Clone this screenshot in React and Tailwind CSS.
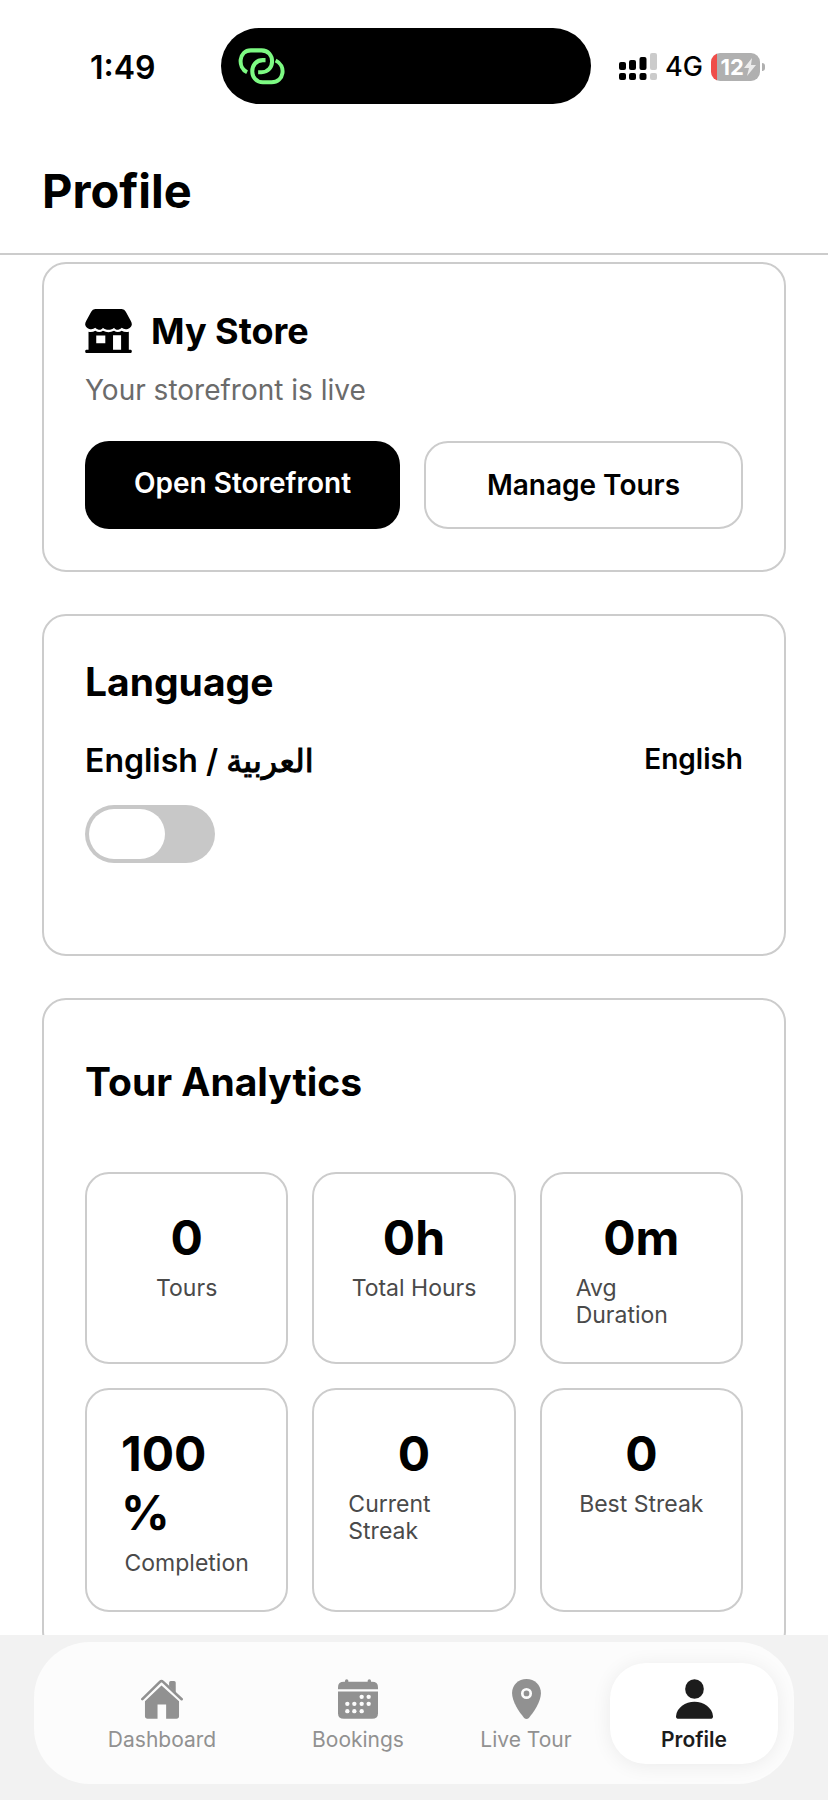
import { useState } from "react";

const stats = [
    { value: "0", label: "Tours" },
    { value: "0h", label: "Total Hours" },
    { value: "0m", label: "Avg Duration" },
    { value: "100%", label: "Completion" },
    { value: "0", label: "Current Streak" },
    { value: "0", label: "Best Streak" },
];

const LinkIcon = () => (
    <svg viewBox="0 0 140 110" className="h-[37px] w-[47px]" fill="none" stroke="#7dfa83" strokeWidth="12" aria-hidden="true">
        <path d="M27 72C-2 58 2 7 38 7H70C112 7 112 72 70 72H60" />
        <path d="M82 36H74C32 36 32 102 74 102H100C138 102 144 52 112 37" />
    </svg>
);

const SignalIcon = () => (
    <svg viewBox="0 0 38 28" className="h-7 w-[38px]" aria-hidden="true">
        <g fill="#000">
            <rect x="0" y="9" width="7" height="8" rx="2" />
            <rect x="0" y="20" width="7" height="7" rx="2" />
            <rect x="10" y="7" width="7" height="10" rx="2" />
            <rect x="10" y="20" width="7" height="7" rx="2" />
            <rect x="20.500" y="4" width="7" height="13" rx="2" />
            <rect x="20.500" y="20" width="7" height="7" rx="2" />
        </g>
        <g fill="#cbcbcb">
            <rect x="31" y="0" width="7" height="17" rx="2" />
            <rect x="31" y="20" width="7" height="7" rx="2" />
        </g>
    </svg>
);

const StoreIcon = () => (
    <svg viewBox="0 0 139 131" className="h-11 w-[47px]" fill="#000" aria-hidden="true">
        <path d="M30 0H109Q117 0 121 8L136 36Q139 42 139 46C137 60 118 64 109 56C99 64 92 64 86 56C78 64 61 64 53 56C47 64 40 64 30 56C21 64 2 60 0 46Q0 42 3 36L18 8Q22 0 30 0Z" />
        <path
            fillRule="evenodd"
            d="M10 68Q22 70 30 65Q42 72 53 65Q69 73 86 65Q97 72 109 65Q117 70 130 68V121H136Q139 121 139 126T136 131H3Q0 131 0 126T3 121H10ZM33 79V102H60V79ZM83 78V121H107V78Z"
        />
    </svg>
);

const HouseIcon = () => (
    <svg viewBox="0 0 127 119" className="h-10 w-[42px]" fill="currentColor" aria-hidden="true">
        <path d="M4 60L58 7Q62 3 66 7L123 60" fill="none" stroke="currentColor" strokeWidth="8" strokeLinecap="round" />
        <path d="M85 10Q85 5 90 5H100Q105 5 105 10V40L85 21Z" />
        <path d="M12 66L62 19L115 66V111Q115 119 107 119H76V76H50V119H20Q12 119 12 111Z" />
    </svg>
);

const CalendarIcon = () => (
    <svg viewBox="0 0 120 119" className="h-10 w-10" fill="currentColor" aria-hidden="true">
        <rect x="21" y="0" width="10" height="16" rx="5" />
        <rect x="89" y="0" width="10" height="16" rx="5" />
        <path d="M0 30V24Q0 8 18 8H102Q120 8 120 24V30Z" />
        <path d="M0 37H120V102Q120 119 102 119H18Q0 119 0 102Z" />
        <g fill="#fcfcfc">
            <circle cx="71" cy="53" r="6.500" />
            <circle cx="92" cy="53" r="6.500" />
            <circle cx="28" cy="74" r="6.500" />
            <circle cx="49" cy="74" r="6.500" />
            <circle cx="71" cy="74" r="6.500" />
            <circle cx="92" cy="74" r="6.500" />
            <circle cx="28" cy="96" r="6.500" />
            <circle cx="49" cy="96" r="6.500" />
            <circle cx="71" cy="96" r="6.500" />
        </g>
    </svg>
);

const PinIcon = () => (
    <svg viewBox="0 0 86 119" className="h-10 w-[29px]" fill="currentColor" aria-hidden="true">
        <path d="M43 0C67 0 86 18 86 42C86 68 64 100 50 116Q43 122 36 116C22 100 0 68 0 42C0 18 19 0 43 0Z" />
        <circle cx="43" cy="43" r="12.500" fill="none" stroke="#fcfcfc" strokeWidth="8" />
    </svg>
);

const PersonIcon = () => (
    <svg viewBox="0 0 111 119" className="h-10 w-[37px]" fill="currentColor" aria-hidden="true">
        <ellipse cx="55.500" cy="29.500" rx="28" ry="29.500" />
        <path d="M0 111C2 86 28 68 55.500 68S109 86 111 111Q111 119 103 119H8Q0 119 0 111Z" />
    </svg>
);

const tabs = [
    { name: "Dashboard", Icon: HouseIcon },
    { name: "Bookings", Icon: CalendarIcon },
    { name: "Live Tour", Icon: PinIcon },
    { name: "Profile", Icon: PersonIcon },
];

function StatusBar() {
    return (
        <div className="grid grid-cols-[221fr_370fr_237fr] items-center pt-7">
            <span className="pt-1 pl-[90px] text-[32px] leading-10 font-semibold">1:49</span>
            <div className="flex h-[76px] items-center rounded-full bg-black pl-[17px]">
                <LinkIcon />
            </div>
            <div className="flex items-center pt-0.5 pl-7">
                <SignalIcon />
                <span className="ml-2 text-[27px] leading-8 font-medium">4G</span>
                <div className="ml-2 flex h-7 w-[49px] items-center justify-end overflow-hidden rounded-[9px] bg-linear-to-r from-[#ef4d49] from-12% to-[#b0b0b0] to-12% pr-1 text-[22px] font-bold text-white">
                    12
                    <svg viewBox="0 0 12 18" className="h-[18px] w-3" fill="#ececec" aria-hidden="true">
                        <path d="M8 0L0 10H5L3 18L12 7H7Z" />
                    </svg>
                </div>
                <div className="ml-0.5 h-2 w-[3px] rounded-r-full bg-[#b0b0b0]" />
            </div>
        </div>
    );
}

function App() {
    const [arabic, setArabic] = useState(false);
    const [activeTab, setActiveTab] = useState("Profile");

    return (
        <div className="flex h-screen flex-col bg-white font-[Inter,'DejaVu_Sans',sans-serif] text-black">
            <header className="shrink-0 border-b-2 border-[#cccccc] pb-8">
                <StatusBar />
                <h1 className="mt-[57px] px-[42px] text-[47px] leading-[60px] font-bold">Profile</h1>
            </header>

            <main className="flex min-h-0 flex-1 flex-col gap-[42px] overflow-y-auto px-[42px] pt-[7px] [scrollbar-width:none]">
                {/* My Store */}
                <section className="shrink-0 rounded-3xl border-2 border-[#cccccc] p-[41px]">
                    <div className="flex items-center gap-[19px]">
                        <StoreIcon />
                        <h2 className="text-[36px] leading-[52px] font-bold">My Store</h2>
                    </div>
                    <p className="mt-[15px] text-[28px] leading-9 text-[#6b6b6b]">Your storefront is live</p>
                    <div className="mt-[33px] flex gap-6 text-center text-[28px] leading-9 font-semibold">
                        <a href="#storefront" className="flex-1 rounded-3xl bg-black py-6 text-white">
                            Open Storefront
                        </a>
                        <a href="#tours" className="flex-1 rounded-3xl border-2 border-[#cccccc] py-6">
                            Manage Tours
                        </a>
                    </div>
                </section>

                {/* Language */}
                <section className="shrink-0 rounded-3xl border-2 border-[#cccccc] p-[41px]">
                    <h2 className="text-[39px] leading-[50px] font-bold">Language</h2>
                    <div className="mt-[34px] flex items-start justify-between font-semibold">
                        <label htmlFor="language" className="text-[32px] leading-10">
                            English / <span className="font-normal [-webkit-text-stroke:1px]">العربية</span>
                        </label>
                        <span className="text-[28px] leading-9">{arabic ? "العربية" : "English"}</span>
                    </div>
                    <input
                        id="language"
                        type="checkbox"
                        role="switch"
                        checked={arabic}
                        onChange={(e) => setArabic(e.target.checked)}
                        className="mt-6 mb-[50px] flex h-[58px] w-[130px] cursor-pointer appearance-none items-center rounded-full bg-[#c8c8c8] px-1 before:h-[50px] before:w-[76px] before:rounded-full before:bg-white checked:justify-end checked:bg-green-500"
                    />
                </section>

                {/* Tour Analytics */}
                <section className="shrink-0 rounded-3xl border-2 border-[#cccccc] p-[41px]">
                    <h2 className="mb-[65px] pt-4 text-[39px] leading-[50px] font-bold">Tour Analytics</h2>
                    <div className="grid grid-cols-3 gap-6">
                        {stats.map((stat) => (
                            <div
                                key={stat.label}
                                className="flex flex-col items-center gap-2 rounded-3xl border-2 border-[#cccccc] px-[34px] pt-[34px] pb-[33px]"
                            >
                                <span className="text-[48px] leading-[59px] font-bold wrap-anywhere">{stat.value}</span>
                                <span className="text-[23px] leading-[27px] text-[#4a4a4a]">{stat.label}</span>
                            </div>
                        ))}
                    </div>
                </section>
            </main>

            <nav className="shrink-0 bg-[#f2f2f2] px-[34px] pt-[7px] pb-4">
                <div className="grid grid-cols-[4fr_3fr_3fr_3fr] rounded-[56px] bg-[#fcfcfc] px-4 pt-[21px] pb-5">
                    {tabs.map(({ name, Icon }) => (
                        <button
                            key={name}
                            onClick={() => setActiveTab(name)}
                            className={
                                name === activeTab
                                    ? "flex flex-col items-center gap-2 rounded-[36px] bg-white pt-4 pb-[11px] text-[21px] leading-[26px] font-semibold text-[#1c1c1c] shadow-[0_2px_20px_rgba(0,0,0,0.07)]"
                                    : "flex flex-col items-center gap-2 rounded-[36px] pt-4 pb-[11px] text-[21px] leading-[26px] text-[#919191]"
                            }
                        >
                            <Icon />
                            {name}
                        </button>
                    ))}
                </div>
            </nav>
        </div>
    );
}

export default App;
